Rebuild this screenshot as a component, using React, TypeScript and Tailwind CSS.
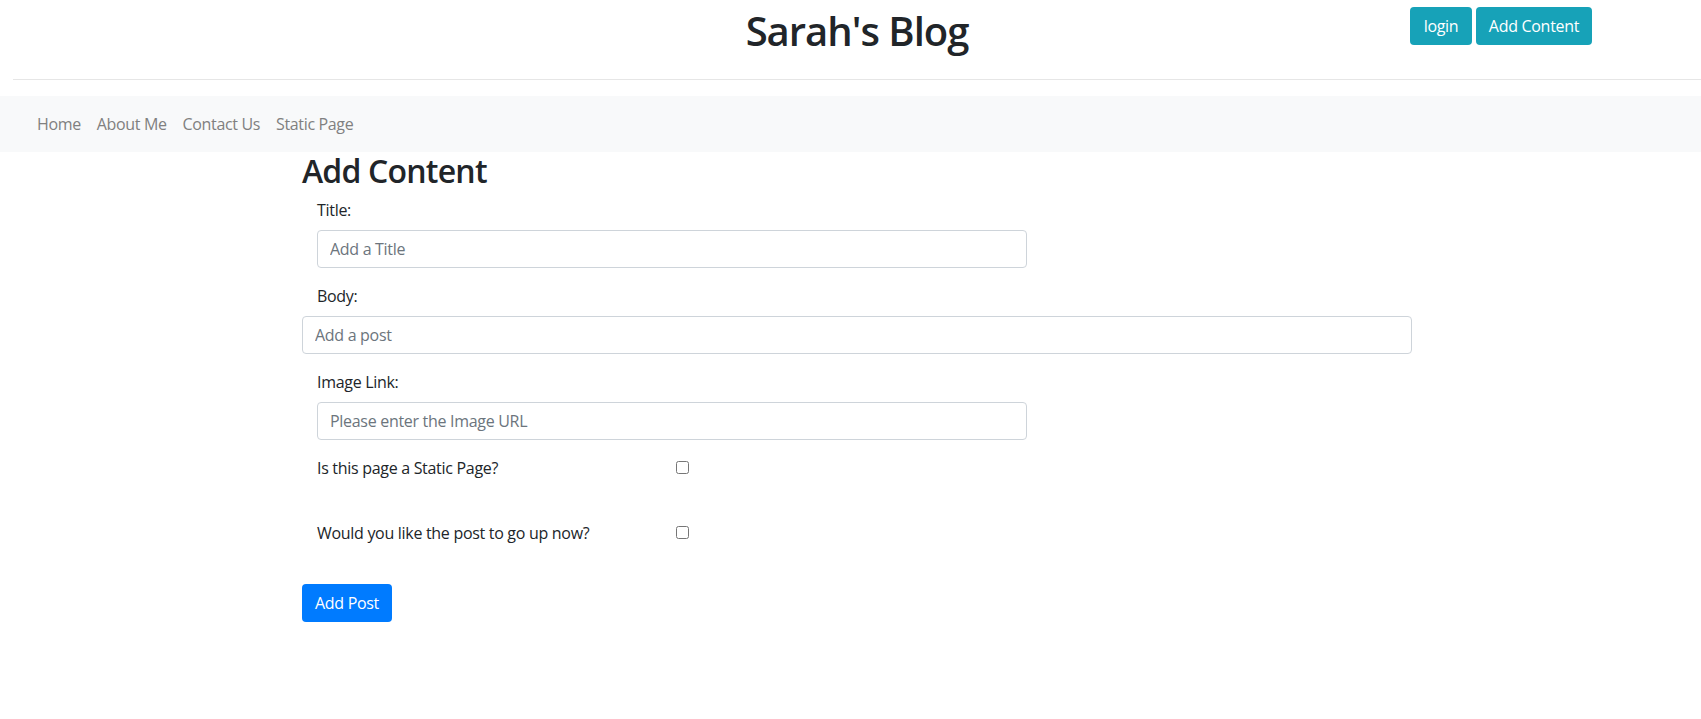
const navLinks = ["Home", "About Me", "Contact Us", "Static Page"];

function Header() {
  return (
    <header className="pl-[13px] pt-[7px]">
      <div className="grid grid-cols-[1fr_auto_1fr] items-start">
        <div />
        <h1 className="text-[40px] leading-[48px] font-semibold tracking-[-1px] text-[#212529] mb-2">
          Sarah's Blog
        </h1>
        <div className="flex justify-end gap-[4px] pr-[109px]">
          <button className="w-[62px] h-[38px] rounded-[4px] bg-[#17a2b8] text-white text-base tracking-[-0.3px]">
            login
          </button>
          <button className="w-[116px] h-[38px] rounded-[4px] bg-[#17a2b8] text-white text-base tracking-[-0.3px]">
            Add Content
          </button>
        </div>
      </div>
      <div className="mt-4 border-t border-[#e6e6e6]" />
    </header>
  );
}

function NavBar() {
  return (
    <nav className="mt-4 h-[56px] bg-[#f8f9fa] flex items-center pl-[29px]">
      {navLinks.map((link) => (
        <a
          key={link}
          href="#"
          className="px-2 text-base leading-6 text-[#808080] tracking-[-0.35px]"
        >
          {link}
        </a>
      ))}
    </nav>
  );
}

function TextField({
  label,
  placeholder,
  wide,
}: {
  label: string;
  placeholder: string;
  wide?: boolean;
}) {
  return (
    <div className="mb-4">
      <label className="block pl-[15px] mb-2 leading-6">{label}</label>
      <div className={wide ? "" : "pl-[15px]"}>
        <input
          type="text"
          placeholder={placeholder}
          className={`${
            wide ? "w-[1110px]" : "w-[710px]"
          } h-[38px] block border border-[#ced4da] rounded-[4px] px-3 text-base tracking-[-0.3px] text-[#495057] placeholder:text-[#6c757d] bg-white outline-none`}
        />
      </div>
    </div>
  );
}

function CheckRow({ label, className }: { label: string; className?: string }) {
  return (
    <div className={`flex items-start pl-[15px] ${className ?? ""}`}>
      <label className="w-[359px] leading-6">{label}</label>
      <input type="checkbox" className="w-[13px] h-[13px] m-0 mt-[5px]" />
    </div>
  );
}

export default function App() {
  return (
    <div
      className="min-h-screen bg-white text-[#212529] text-base tracking-[-0.3px]"
      style={{ fontFamily: '"Open Sans", "Noto Sans", sans-serif' }}
    >
      <Header />
      <NavBar />
      <main className="ml-[302px] w-[1110px]">
        <h2 className="text-[32px] leading-[38px] font-semibold tracking-[-0.8px] mb-2">
          Add Content
        </h2>
        <form onSubmit={(e) => e.preventDefault()}>
          <TextField label="Title:" placeholder="Add a Title" />
          <TextField label="Body:" placeholder="Add a post" wide />
          <TextField label="Image Link:" placeholder="Please enter the Image URL" />
          <CheckRow label="Is this page a Static Page?" className="mb-[41px]" />
          <CheckRow label="Would you like the post to go up now?" />
          <button
            type="submit"
            className="mt-[39px] w-[90px] h-[38px] rounded-[4px] bg-[#007bff] text-white text-base"
          >
            Add Post
          </button>
        </form>
      </main>
    </div>
  );
}
